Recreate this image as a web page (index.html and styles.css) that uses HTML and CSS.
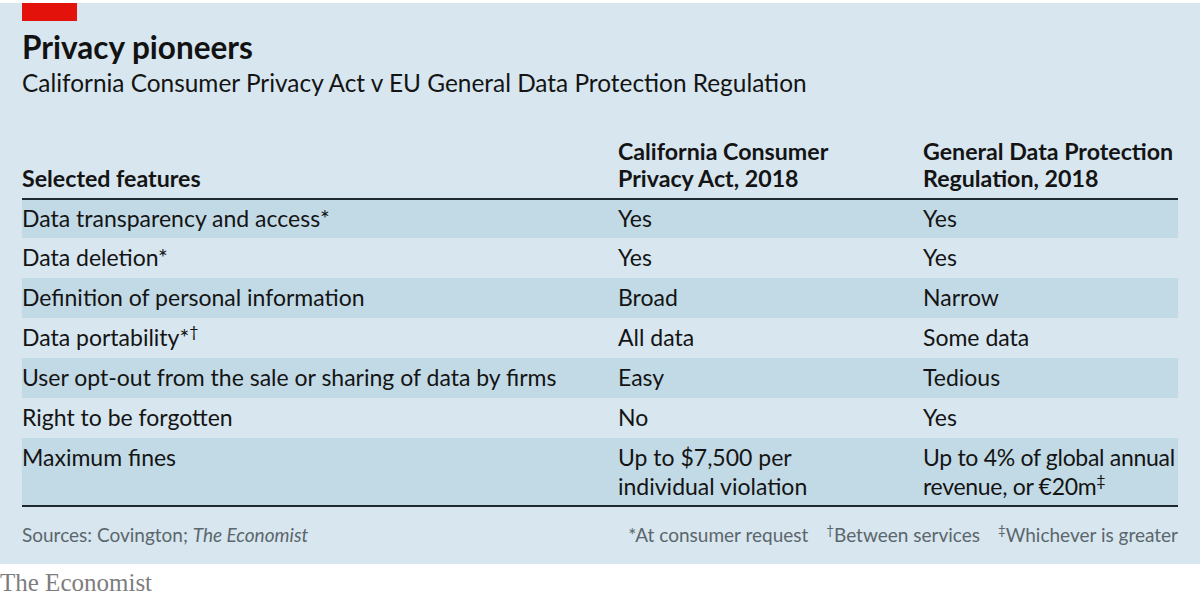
FILE: index.html
```html
<!DOCTYPE html>
<html>
<head>
<meta charset="utf-8">
<link rel="stylesheet" href="styles.css">
</head>
<body>
<div class="panel">
  <div class="redbar"></div>
  <h1 class="title">Privacy pioneers</h1>
  <p class="subtitle">California Consumer Privacy Act v EU General Data Protection Regulation</p>
  <div class="table">
    <div class="row head">
      <div class="c1">Selected features</div>
      <div class="c2">California Consumer<br>Privacy Act, 2018</div>
      <div class="c3">General Data Protection<br>Regulation, 2018</div>
    </div>
    <div class="row shade first">
      <div class="c1">Data transparency and access*</div>
      <div class="c2">Yes</div>
      <div class="c3">Yes</div>
    </div>
    <div class="row">
      <div class="c1">Data deletion*</div>
      <div class="c2">Yes</div>
      <div class="c3">Yes</div>
    </div>
    <div class="row shade">
      <div class="c1">Definition of personal information</div>
      <div class="c2">Broad</div>
      <div class="c3">Narrow</div>
    </div>
    <div class="row">
      <div class="c1">Data portability*<sup>†</sup></div>
      <div class="c2">All data</div>
      <div class="c3">Some data</div>
    </div>
    <div class="row shade">
      <div class="c1">User opt-out from the sale or sharing of data by firms</div>
      <div class="c2">Easy</div>
      <div class="c3">Tedious</div>
    </div>
    <div class="row">
      <div class="c1">Right to be forgotten</div>
      <div class="c2">No</div>
      <div class="c3">Yes</div>
    </div>
    <div class="row shade tall">
      <div class="c1">Maximum fines</div>
      <div class="c2">Up to $7,500 per<br>individual violation</div>
      <div class="c3 tight">Up to 4% of global annual<br>revenue, or €20m<sup>‡</sup></div>
    </div>
  </div>
  <div class="foot">
    <div class="sources">Sources: Covington; <em>The Economist</em></div>
    <div class="notes">
      <span>*At consumer request</span>
      <span><sup>†</sup>Between services</span>
      <span><sup>‡</sup>Whichever is greater</span>
    </div>
  </div>
</div>
<div class="logo">The Economist</div>
</body>
</html>
```
FILE: styles.css
```css
html, body {
  margin: 0;
  padding: 0;
  background: #ffffff;
}
body {
  width: 1200px;
  height: 598px;
  overflow: hidden;
  font-family: Lato, "Open Sans", sans-serif;
  color: #141414;
}
.panel {
  margin-top: 3px;
  height: 561px;
  background: #d7e6ef;
  padding: 0 22px 0 22px;
  box-sizing: border-box;
}
.redbar {
  width: 55px;
  height: 18px;
  background: #e3120b;
}
.title {
  margin: 8px 0 0 0;
  font-size: 31.5px;
  line-height: 36px;
  font-weight: 700;
  color: #121212;
}
.subtitle {
  margin: 2px 0 0 0;
  font-size: 24.4px;
  line-height: 32px;
  color: #141414;
}
.table {
  margin-top: 39px;
  border-bottom: 2px solid #1f2a30;
}
.row {
  display: flex;
  height: 40px;
  align-items: flex-start;
  font-size: 23px;
  line-height: 28px;
  box-sizing: border-box;
  padding-top: 5px;
  white-space: nowrap;
}
.row.first {
  height: 38px;
  padding-top: 4px;
}
.row.shade {
  background: #c2dae6;
}
.row.head {
  height: auto;
  padding: 0 0 6px 0;
  align-items: flex-end;
  font-weight: 700;
  font-size: 23.2px;
  line-height: 27px;
  border-bottom: 2px solid #1f2a30;
}
.row.tall {
  height: 67px;
  line-height: 29px;
  padding-top: 5px;
}
.c1 { width: 596px; flex: none; }
.c2 { width: 305px; flex: none; }
.c3 { flex: 1; min-width: 0; }
.tight { letter-spacing: -0.3px; }
sup {
  font-size: 0.7em;
  line-height: 0;
  vertical-align: 0.55em;
}
.foot {
  display: flex;
  justify-content: space-between;
  align-items: baseline;
  margin-top: 16px;
  font-size: 19px;
  line-height: 24px;
  color: #5b666c;
}
.notes {
  display: flex;
  gap: 18px;
}
.logo {
  padding-top: 7px;
  font-family: "Liberation Serif", serif;
  font-size: 25px;
  color: #7d7d7d;
  line-height: 24px;
}
```
